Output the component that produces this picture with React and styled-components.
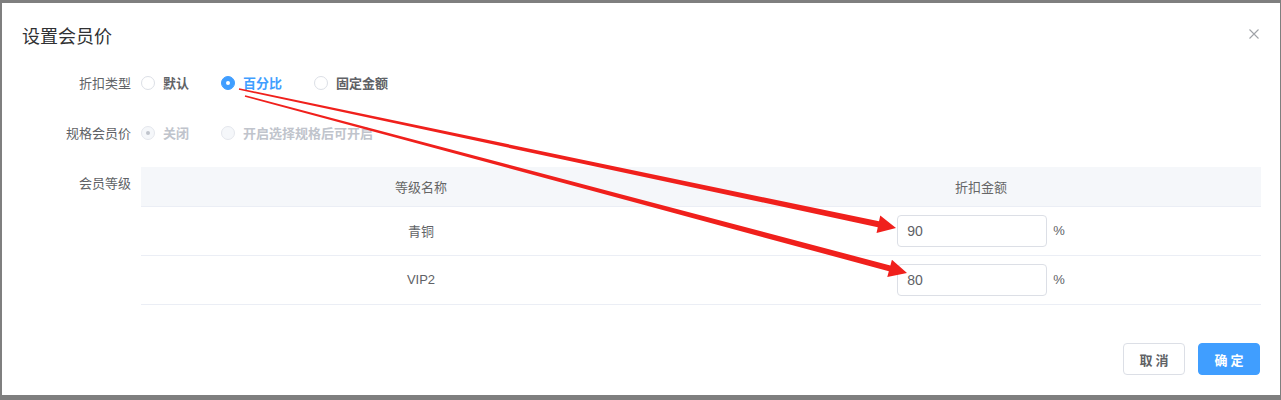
import React from "react";
import styled, { createGlobalStyle } from "styled-components";

const GlobalStyle = createGlobalStyle`
  html, body { margin: 0; padding: 0; }
  body {
    background: #7f7f7f;
    font-family: "Liberation Sans", "Noto Sans CJK SC", sans-serif;
  }
  * { box-sizing: border-box; }
`;

const Page = styled.div`
  position: relative;
  width: 1281px;
  height: 400px;
  padding: 3px 1px 5px 2px;
`;

const Dialog = styled.div`
  height: 100%;
  background: #fff;
  display: flex;
  flex-direction: column;
`;

const Header = styled.div`
  display: flex;
  align-items: center;
  justify-content: space-between;
  padding: 20px 21px 0 20px;
`;

const Title = styled.div`
  font-family: "Noto Sans CJK SC", sans-serif;
  font-size: 18px;
  line-height: 24px;
  color: #303133;
`;

const Close = styled.button`
  border: 0;
  padding: 0;
  background: transparent;
  width: 10px;
  height: 10px;
  display: flex;
  margin-top: -2px;
  color: #a0a3a8;
`;

const Body = styled.div`
  padding: 16px 19px 0 20px;
`;

const FormItem = styled.div`
  display: flex;
  margin-bottom: 10px;
`;

const Label = styled.div`
  width: 119px;
  flex-shrink: 0;
  padding-right: 10px;
  text-align: right;
  line-height: 40px;
  font-family: "Noto Sans CJK SC", sans-serif;
  font-size: 13px;
  color: #606266;
`;

const Content = styled.div`
  flex: 1;
  min-height: 40px;
  display: flex;
  align-items: ${(p) => (p.$top ? "flex-start" : "center")};
`;

const RadioGroup = styled.div`
  display: flex;
  align-items: center;
  gap: 32px;
`;

const RadioItem = styled.label`
  display: flex;
  align-items: center;
  gap: 8px;
  font-family: "Noto Sans CJK SC", sans-serif;
  font-size: 13px;
  font-weight: 600;
  line-height: 20px;
  color: ${(p) => (p.$disabled ? "#c0c4cc" : p.$checked ? "#409eff" : "#606266")};
`;

const Circle = styled.span`
  width: 14px;
  height: 14px;
  border-radius: 50%;
  display: flex;
  align-items: center;
  justify-content: center;
  border: 1px solid
    ${(p) => (p.$disabled ? "#e4e7ed" : p.$checked ? "#409eff" : "#dcdfe6")};
  background: ${(p) => (p.$disabled ? "#f5f7fa" : p.$checked ? "#409eff" : "#fff")};
  &::after {
    content: "";
    width: 4px;
    height: 4px;
    border-radius: 50%;
    background: ${(p) => (p.$disabled ? "#c0c4cc" : "#fff")};
    display: ${(p) => (p.$checked ? "block" : "none")};
  }
`;

const Table = styled.table`
  width: 100%;
  margin-top: 4px;
  border-collapse: collapse;
  font-family: "Liberation Sans", "Noto Sans CJK SC", sans-serif;
  font-size: 13px;
`;

const Th = styled.th`
  height: 39px;
  padding: 0;
  background: #f5f7fa;
  border-bottom: 1px solid #ebeef5;
  font-weight: 400;
  color: #666;
  text-align: center;
  width: 50%;
`;

const Td = styled.td`
  height: 49px;
  padding: 0;
  border-bottom: 1px solid #ebeef5;
  color: #606266;
  text-align: center;
`;

const InputWrap = styled.div`
  display: inline-flex;
  align-items: center;
  gap: 6px;
  color: #606266;
  font-size: 13px;
`;

const Input = styled.input`
  width: 150px;
  height: 32px;
  border: 1px solid #dcdfe6;
  border-radius: 4px;
  padding: 0 9px;
  font-family: "Liberation Sans", sans-serif;
  font-size: 14px;
  color: #606266;
  outline: none;
`;

const Footer = styled.div`
  margin-top: auto;
  padding: 0 20px 20px;
  display: flex;
  justify-content: flex-end;
  gap: 13px;
`;

const Button = styled.button`
  width: 62px;
  height: 32px;
  border-radius: 4px;
  font-family: "Noto Sans CJK SC", sans-serif;
  font-size: 13px;
  font-weight: 700;
  padding: 0;
  border: 1px solid ${(p) => (p.$primary ? "#409eff" : "#dcdfe6")};
  background: ${(p) => (p.$primary ? "#409eff" : "#fff")};
  color: ${(p) => (p.$primary ? "#fff" : "#606266")};
  white-space: pre;
`;

const Overlay = styled.svg`
  position: absolute;
  left: 0;
  top: 0;
  pointer-events: none;
`;

function Radio({ label, checked, disabled }) {
  return (
    <RadioItem $checked={checked} $disabled={disabled}>
      <Circle $checked={checked} $disabled={disabled} />
      {label}
    </RadioItem>
  );
}

const levels = [
  { name: "青铜", value: "90" },
  { name: "VIP2", value: "80" },
];

export default function App() {
  return (
    <Page>
      <GlobalStyle />
      <Dialog>
        <Header>
          <Title>设置会员价</Title>
          <Close aria-label="close">
            <svg width="10" height="10" viewBox="0 0 10 10">
              <path d="M0.5 0.5 L9.5 9.5 M9.5 0.5 L0.5 9.5" stroke="currentColor" strokeWidth="1.1" fill="none" />
            </svg>
          </Close>
        </Header>
        <Body>
          <FormItem>
            <Label>折扣类型</Label>
            <Content>
              <RadioGroup>
                <Radio label="默认" />
                <Radio label="百分比" checked />
                <Radio label="固定金额" />
              </RadioGroup>
            </Content>
          </FormItem>
          <FormItem>
            <Label>规格会员价</Label>
            <Content>
              <RadioGroup>
                <Radio label="关闭" checked disabled />
                <Radio label="开启选择规格后可开启" disabled />
              </RadioGroup>
            </Content>
          </FormItem>
          <FormItem>
            <Label>会员等级</Label>
            <Content $top>
              <Table>
                <thead>
                  <tr>
                    <Th>等级名称</Th>
                    <Th>折扣金额</Th>
                  </tr>
                </thead>
                <tbody>
                  {levels.map((l) => (
                    <tr key={l.name}>
                      <Td>{l.name}</Td>
                      <Td>
                        <InputWrap>
                          <Input defaultValue={l.value} />
                          %
                        </InputWrap>
                      </Td>
                    </tr>
                  ))}
                </tbody>
              </Table>
            </Content>
          </FormItem>
        </Body>
        <Footer>
          <Button>取 消</Button>
          <Button $primary>确 定</Button>
        </Footer>
      </Dialog>
      <Overlay width="1281" height="400" viewBox="0 0 1281 400">
        <polygon
          fill="#f0201c"
          points="239.17,88.22 879.02,221.36 880.26,215.5 896,228 876.54,233.1 877.78,227.24 238.83,89.78"
        />
        <polygon
          fill="#f0201c"
          points="245.21,95.23 890.38,265.45 891.93,259.66 907,273 887.28,277.04 888.83,271.25 244.79,96.77"
        />
      </Overlay>
    </Page>
  );
}
